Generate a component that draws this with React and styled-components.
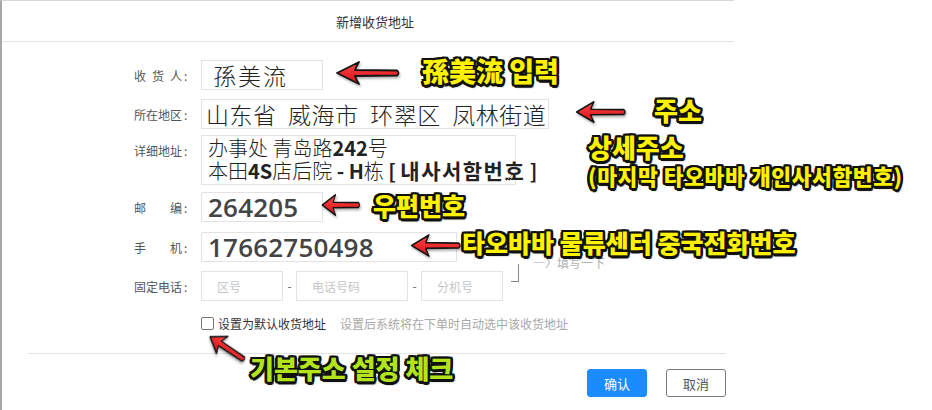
import React from 'react';
import styled, { createGlobalStyle } from 'styled-components';

const GlobalStyle = createGlobalStyle`
  html, body {
    margin: 0;
    padding: 0;
    background: #fff;
  }
  body {
    font-family: "Noto Sans CJK SC", "Noto Sans", sans-serif;
  }
`;

const Stage = styled.div`
  position: relative;
  width: 932px;
  height: 410px;
  overflow: hidden;
  background: #fff;
`;

const Dialog = styled.div`
  width: 732px;
  height: 409px;
  border-top: 1px solid #d5d7db;
  border-left: 2px solid #a8a8a8;
  display: flex;
  flex-direction: column;
`;

const Header = styled.div`
  height: 40px;
  border-bottom: 1px solid #e3e3e3;
  display: flex;
  align-items: center;
  justify-content: center;
  padding-left: 14px;
  font-size: 13px;
  color: #333;
`;

const Form = styled.div`
  display: flex;
  flex-direction: column;
  padding-top: 18px;
`;

const Row = styled.div`
  display: flex;
  align-items: flex-start;
  margin-top: ${p => p.$mt || 0}px;
`;

const Label = styled.div`
  width: 186px;
  height: 30px;
  display: flex;
  align-items: center;
  justify-content: flex-end;
  padding-right: 13px;
  font-size: 12px;
  color: #555;
`;

const LabelChars = styled.span`
  width: 48px;
  display: flex;
  justify-content: space-between;
`;

const Colon = styled.span`
  margin-left: 2px;
  width: 4px;
`;

const Input = styled.div`
  box-sizing: border-box;
  width: ${p => p.$w}px;
  height: 30px;
  border: 1px solid #e3e3e3;
  display: flex;
  align-items: center;
  padding-left: ${p => p.$pad || 5}px;
  white-space: nowrap;
  overflow: visible;
  color: #222;
`;

const NameText = styled.span`
  font-size: 23px;
  letter-spacing: 2px;
  font-weight: 300;
`;

const RegionText = styled.span`
  font-size: 23px;
  font-weight: 300;
  word-spacing: 6px;
  letter-spacing: 0.5px;
`;

const NumberText = styled.span`
  font-family: "Open Sans", "Liberation Sans", sans-serif;
  font-size: 26px;
  font-weight: 600;
  color: #444;
  letter-spacing: 0.2px;
`;

const TextArea = styled.div`
  position: relative;
  box-sizing: border-box;
  width: 315px;
  height: 50px;
  border: 1px solid #e3e3e3;
  padding: 0 0 0 6px;
  font-size: 20px;
  line-height: 23px;
  font-weight: 300;
  color: #222;
  white-space: nowrap;
  overflow: visible;
`;

const Strong = styled.b`
  font-weight: 700;
`;

const Hangul = styled.b`
  font-family: "Noto Sans CJK KR", "Noto Sans CJK SC", sans-serif;
  font-weight: 700;
  font-size: 21px;
  letter-spacing: 1.5px;
`;

const Grip = styled.svg`
  position: absolute;
  right: 3px;
  bottom: 3px;
`;

const Placeholder = styled(Input)`
  padding-left: 15px;
  font-size: 12px;
  color: #c6c6c6;
`;

const Dash = styled.span`
  width: 13px;
  height: 30px;
  line-height: 30px;
  text-align: center;
  font-size: 12px;
  color: #666;
`;

const CheckRow = styled.div`
  display: flex;
  align-items: center;
  margin-top: 14px;
  padding-left: 199px;
  font-size: 12px;
  color: #333;
`;

const Box = styled.span`
  box-sizing: border-box;
  width: 13px;
  height: 13px;
  border: 1px solid #777;
  border-radius: 2px;
  margin-right: 4px;
`;

const Hint = styled.span`
  margin-left: 14px;
  color: #a8a8a8;
`;

const Footer = styled.div`
  margin: 21px 8px 0 26px;
  border-top: 1px solid #e3e3e3;
  padding-top: 15px;
  display: flex;
  justify-content: flex-end;
  gap: 19px;
`;

const Button = styled.button`
  box-sizing: border-box;
  width: 60px;
  height: 28px;
  border-radius: 3px;
  font-family: "Noto Sans CJK SC", sans-serif;
  font-size: 13px;
  border: 1px solid ${p => (p.$primary ? '#1a8cff' : '#7a7a7a')};
  background: ${p => (p.$primary ? '#1a8cff' : '#fff')};
  color: ${p => (p.$primary ? '#fff' : '#555')};
  padding: 0;
`;

const Callout = styled.div`
  position: absolute;
  left: ${p => p.$x}px;
  top: ${p => p.$y}px;
  font-family: "Noto Sans CJK KR", "Noto Sans CJK SC", sans-serif;
  font-weight: 900;
  font-size: ${p => p.$size}px;
  letter-spacing: ${p => p.$ls || 0}px;
  line-height: 1.15;
  white-space: nowrap;
  color: ${p => p.$color || '#fff200'};
  text-shadow:
    -2px -2px 0 #111, 2px -2px 0 #111, -2px 2px 0 #111, 2px 2px 0 #111,
    0 -2.5px 0 #111, 0 2.5px 0 #111, -2.5px 0 0 #111, 2.5px 0 0 #111,
    -1px -2.5px 0 #111, 1px 2.5px 0 #111, -2.5px 1px 0 #111, 2.5px -1px 0 #111,
    2px 3px 2px rgba(0, 0, 0, 0.35);
`;

const Remnant = styled.div`
  position: absolute;
  left: 533px;
  top: 254px;
  font-size: 12px;
  color: #b0b0b0;
  white-space: nowrap;
`;

const Bracket = styled.div`
  position: absolute;
  left: 511px;
  top: 264px;
  width: 7px;
  height: 17px;
  border-right: 1px solid #888;
  border-bottom: 1px solid #888;
`;

const ArrowSvg = styled.svg`
  position: absolute;
  left: ${p => p.$x}px;
  top: ${p => p.$y}px;
  overflow: visible;
  transform: rotate(${p => p.$rot || 0}deg);
  transform-origin: 0 50%;
  filter: drop-shadow(1px 2px 1px rgba(0, 0, 0, 0.3));
`;

function Arrow({ x, y, w, h, rot }) {
  return (
    <ArrowSvg $x={x} $y={y} $rot={rot} width={w} height={h} viewBox="0 0 66 26" preserveAspectRatio="none">
      <defs>
        <linearGradient id="redfill" x1="0" y1="0" x2="0" y2="1">
          <stop offset="0" stopColor="#ff4a4a" />
          <stop offset="1" stopColor="#d80c12" />
        </linearGradient>
      </defs>
      <path
        d="M2 13 L24 2 Q21 7 20 10 L62 10.5 Q65 13 62 15.5 L20 16 Q21 19 24 24 Z"
        fill="url(#redfill)"
        stroke="#151515"
        strokeWidth="1.8"
        strokeLinejoin="round"
      />
    </ArrowSvg>
  );
}

function FieldLabel({ chars }) {
  return (
    <Label>
      <LabelChars>
        {chars.map((c, i) => (
          <span key={i}>{c}</span>
        ))}
      </LabelChars>
      <Colon>:</Colon>
    </Label>
  );
}

export default function App() {
  return (
    <Stage>
      <GlobalStyle />
      <Dialog>
        <Header>新增收货地址</Header>
        <Form>
          <Row>
            <FieldLabel chars={['收', '货', '人']} />
            <Input $w={122} $pad={11}>
              <NameText>孫美流</NameText>
            </Input>
          </Row>
          <Row $mt={9}>
            <FieldLabel chars={['所', '在', '地', '区']} />
            <Input $w={348} $pad={4}>
              <RegionText>山东省 威海市 环翠区 凤林街道</RegionText>
            </Input>
          </Row>
          <Row $mt={6}>
            <FieldLabel chars={['详', '细', '地', '址']} />
            <TextArea>
              办事处 青岛路<Strong>242</Strong>号
              <br />
              本田<Strong>4S</Strong>店后院 <Strong>- H</Strong>栋 <Strong>[ </Strong>
              <Hangul>내사서함번호</Hangul>
              <Strong> ]</Strong>
              <Grip width="7" height="7" viewBox="0 0 7 7">
                <path d="M1 7 L7 1 M4 7 L7 4" stroke="#999" strokeWidth="0.8" />
              </Grip>
            </TextArea>
          </Row>
          <Row $mt={7}>
            <FieldLabel chars={['邮', '编']} />
            <Input $w={122} $pad={6}>
              <NumberText>264205</NumberText>
            </Input>
          </Row>
          <Row $mt={10}>
            <FieldLabel chars={['手', '机']} />
            <Input $w={256} $pad={6}>
              <NumberText>17662750498</NumberText>
            </Input>
          </Row>
          <Row $mt={9}>
            <FieldLabel chars={['固', '定', '电', '话']} />
            <Placeholder $w={82}>区号</Placeholder>
            <Dash>-</Dash>
            <Placeholder $w={112}>电话号码</Placeholder>
            <Dash>-</Dash>
            <Placeholder $w={82}>分机号</Placeholder>
          </Row>
          <CheckRow>
            <Box />
            设置为默认收货地址
            <Hint>设置后系统将在下单时自动选中该收货地址</Hint>
          </CheckRow>
        </Form>
        <Footer>
          <Button $primary>确认</Button>
          <Button>取消</Button>
        </Footer>
      </Dialog>

      <Bracket />
      <Remnant>─〉填写一下</Remnant>

      <Arrow x={335} y={60} w={66} h={26} />
      <Callout $x={422} $y={55} $size={27}>孫美流 입력</Callout>

      <Arrow x={575} y={100} w={52} h={24} />
      <Callout $x={654} $y={95} $size={26}>주소</Callout>
      <Callout $x={588} $y={132} $size={26}>상세주소</Callout>
      <Callout $x={588} $y={164} $size={21.5} $ls={0.6}>(마지막 타오바바 개인사서함번호)</Callout>

      <Arrow x={321} y={193} w={40} h={24} />
      <Callout $x={373} $y={191} $size={25}>우편번호</Callout>

      <Arrow x={410} y={233} w={52} h={25} />
      <Callout $x={462} $y={228} $size={25}>타오바바 물류센터 중국전화번호</Callout>

      <Arrow x={209} y={324} w={44} h={24} rot={34} />
      <Callout $x={250} $y={353} $size={26} $color="#b3e31b">기본주소 설정 체크</Callout>
    </Stage>
  );
}
